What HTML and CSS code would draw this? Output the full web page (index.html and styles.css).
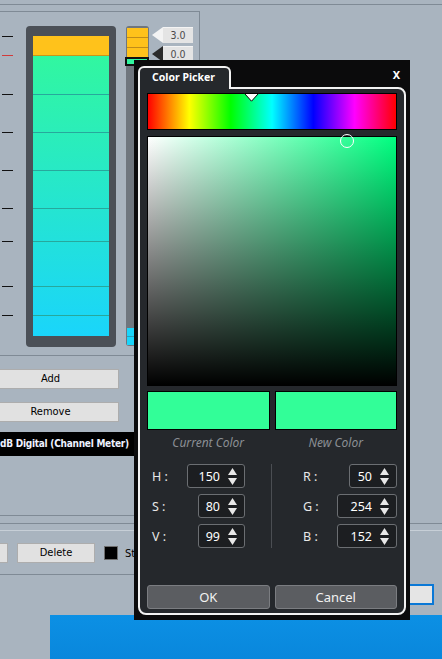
FILE: index.html
```html
<!DOCTYPE html>
<html>
<head>
<meta charset="utf-8">
<title>Color Picker</title>
<link rel="stylesheet" href="styles.css">
</head>
<body>
<div class="screen">
  <div class="topstrip"></div>

  <div class="left-panel">
    <div class="meters">
      <div class="ticks">
        <span class="tick" style="top:10px"></span>
        <span class="tick red" style="top:29px"></span>
        <span class="tick" style="top:68px"></span>
        <span class="tick" style="top:106px"></span>
        <span class="tick" style="top:144px"></span>
        <span class="tick" style="top:182px"></span>
        <span class="tick" style="top:215px"></span>
        <span class="tick" style="top:260px"></span>
        <span class="tick" style="top:289px"></span>
      </div>
      <div class="meter">
        <div class="bar">
          <div class="peak"></div>
          <div class="level">
            <div class="seg" style="height:38px"></div>
            <div class="seg" style="height:38px"></div>
            <div class="seg" style="height:38px"></div>
            <div class="seg" style="height:38px"></div>
            <div class="seg" style="height:33px"></div>
            <div class="seg" style="height:45px"></div>
            <div class="seg" style="height:29px"></div>
            <div class="seg" style="height:21px"></div>
          </div>
        </div>
      </div>
      <div class="mini">
        <div class="mini-seg yellow"></div>
        <div class="mini-seg yellow"></div>
        <div class="mini-seg yellow last"></div>
        <div class="mini-active"><div class="mini-active-fill"></div></div>
        <div class="mini-fill"></div>
        <div class="mini-seg cyan"></div>
        <div class="mini-seg cyan last"></div>
      </div>
      <div class="tags">
        <div class="tag light"><span class="arrow"></span><span class="val">3.0</span></div>
        <div class="tag dark"><span class="arrow"></span><span class="val">0.0</span></div>
      </div>
    </div>
    <div class="rule"></div>
    <button class="btn wide">Add</button>
    <button class="btn wide">Remove</button>
    <div class="band">dB Digital (Channel Meter)</div>
  </div>

  <div class="divider"></div>

  <div class="tools">
    <button class="btn cut"></button>
    <button class="btn del">Delete</button>
    <span class="check"></span>
    <span class="tool-label">Style</span>
  </div>
  <div class="rule2"></div>
  <div class="action-row"><button class="btn focus">Close</button></div>
  <div class="taskbar"><div class="task-gap"></div><div class="task-blue"></div></div>

  <div class="dialog">
    <div class="dlg-head">
      <div class="tab">Color Picker</div>
      <span class="close">X</span>
    </div>
    <div class="dlg-body">
      <div class="hue">
        <svg class="hue-mark" width="15" height="9" viewBox="0 0 15 9"><polygon points="0.5,0.5 14.5,0.5 7.5,8.2" fill="#ffffff" stroke="#000" stroke-width="1"/></svg>
      </div>
      <div class="sv"><span class="sv-cursor"></span></div>
      <div class="swatches">
        <div class="swatch"></div>
        <div class="swatch"></div>
      </div>
      <div class="swatch-labels">
        <span>Current Color</span>
        <span>New Color</span>
      </div>
      <div class="controls">
        <div class="col left">
          <div class="field"><span class="lbl">H :</span><div class="spin w58"><span>150</span><svg width="9" height="17" viewBox="0 0 9 17"><polygon points="4.5,0 9,7 0,7" fill="#e8e8e8"/><polygon points="0,10 9,10 4.5,17" fill="#e8e8e8"/></svg></div></div>
          <div class="field"><span class="lbl">S :</span><div class="spin w47"><span>80</span><svg width="9" height="17" viewBox="0 0 9 17"><polygon points="4.5,0 9,7 0,7" fill="#e8e8e8"/><polygon points="0,10 9,10 4.5,17" fill="#e8e8e8"/></svg></div></div>
          <div class="field"><span class="lbl">V :</span><div class="spin w47"><span>99</span><svg width="9" height="17" viewBox="0 0 9 17"><polygon points="4.5,0 9,7 0,7" fill="#e8e8e8"/><polygon points="0,10 9,10 4.5,17" fill="#e8e8e8"/></svg></div></div>
        </div>
        <div class="sep"></div>
        <div class="col right">
          <div class="field"><span class="lbl">R :</span><div class="spin w48"><span>50</span><svg width="9" height="17" viewBox="0 0 9 17"><polygon points="4.5,0 9,7 0,7" fill="#e8e8e8"/><polygon points="0,10 9,10 4.5,17" fill="#e8e8e8"/></svg></div></div>
          <div class="field"><span class="lbl">G :</span><div class="spin w60"><span>254</span><svg width="9" height="17" viewBox="0 0 9 17"><polygon points="4.5,0 9,7 0,7" fill="#e8e8e8"/><polygon points="0,10 9,10 4.5,17" fill="#e8e8e8"/></svg></div></div>
          <div class="field"><span class="lbl">B :</span><div class="spin w60"><span>152</span><svg width="9" height="17" viewBox="0 0 9 17"><polygon points="4.5,0 9,7 0,7" fill="#e8e8e8"/><polygon points="0,10 9,10 4.5,17" fill="#e8e8e8"/></svg></div></div>
        </div>
      </div>
      <div class="buttons">
        <button class="dbtn">OK</button>
        <button class="dbtn">Cancel</button>
      </div>
    </div>
  </div>
</div>
</body>
</html>
```

FILE: styles.css
```css
* { box-sizing: border-box; }
html, body { margin: 0; padding: 0; }
body {
  width: 442px;
  height: 659px;
  overflow: hidden;
  background: #a9b4bf;
  font-family: "DejaVu Sans Condensed", "DejaVu Sans", sans-serif;
}
.screen {
  position: relative;
  width: 442px;
  height: 659px;
  overflow: hidden;
  background: #a9b4bf;
  display: flex;
  flex-direction: column;
}
.topstrip {
  height: 5px;
  flex: none;
  border-bottom: 1px solid #7f8a95;
}

/* left panel */
.left-panel {
  width: 200px;
  height: 505px;
  flex: none;
  margin-top: 6px;
  border-top: 1px solid #7f8a95;
  border-right: 1px solid #7f8a95;
  border-bottom: 1px solid #7f8a95;
  padding-top: 14px;
  display: flex;
  flex-direction: column;
}
.meters { display: flex; height: 321px; flex: none; }
.ticks { position: relative; width: 26px; flex: none; }
.tick { position: absolute; left: 2px; width: 11px; height: 1px; background: #111; }
.tick.red { background: #d23a3a; }
.meter {
  width: 90px;
  height: 321px;
  flex: none;
  background: #4b5057;
  border-radius: 4px;
  padding: 10px 7px 11px;
}
.bar { height: 300px; display: flex; flex-direction: column; }
.peak { height: 20px; flex: none; background: #ffc21b; border-bottom: 1px solid #c9961a; }
.level {
  flex: 1;
  background: linear-gradient(#31f7a0, #1ad5fb);
  display: flex;
  flex-direction: column;
}
.seg { flex: none; border-top: 1px solid #27a89c; }
.seg:first-child { border-top: 0; }

.mini {
  width: 23px;
  height: 320px;
  flex: none;
  margin-left: 10px;
  background: #6f767e;
  border-radius: 3px;
  padding: 2px 1px 1px;
  display: flex;
  flex-direction: column;
}
.mini-seg { height: 10px; flex: none; border-bottom: 1px solid #c08c1a; }
.mini-seg.yellow { background: #ffc21b; }
.mini-seg.yellow.last { height: 9px; border-bottom: 0; }
.mini-seg.cyan { background: #1ad5fb; height: 9px; border-bottom: 1px solid #2a9fb8; }
.mini-seg.cyan.last { height: 8px; border-bottom: 0; }
.mini-active {
  height: 9px;
  flex: none;
  margin: 0 -1px 0 -2px;
  background: #111;
  padding: 2px 2px;
}
.mini-active-fill { height: 5px; background: #31f7a0; }
.mini-fill { flex: 1; }

.tags { margin-left: 3px; padding-top: 1px; display: flex; flex-direction: column; gap: 3px; }
.tag { display: flex; height: 16px; }
.tag .arrow {
  width: 0;
  height: 0;
  border-top: 8px solid transparent;
  border-bottom: 8px solid transparent;
  border-right: 11px solid #f3f3f3;
}
.tag.dark .arrow { border-right-color: #2b2b2b; }
.tag .val {
  width: 30px;
  background: #e4e4e4;
  border-top: 1px solid #f4f4f4;
  color: #4a4a4a;
  font-size: 10.5px;
  line-height: 15px;
  text-align: center;
}

.rule { height: 1px; flex: none; margin-top: 8px; background: #7f8a95; }
.btn {
  display: block;
  font-family: "DejaVu Sans Condensed", "DejaVu Sans", sans-serif;
  font-size: 11px;
  color: #000;
  background: #e1e1e1;
  border: 1px solid #adadad;
  padding: 0;
  height: 20px;
  line-height: 18px;
  text-align: center;
}
.btn.wide { width: 137px; margin-left: -18px; margin-top: 13px; flex: none; }
.band {
  height: 24px;
  flex: none;
  margin-top: 10px;
  width: 200px;
  background: #000;
  color: #eef2ff;
  font-weight: 700;
  font-size: 10px;
  line-height: 24px;
  letter-spacing: -0.25px;
  white-space: nowrap;
  overflow: hidden;
}

.divider {
  height: 8px;
  flex: none;
  margin-top: 7px;
  border-top: 1px solid #7f8a95;
  border-bottom: 1px solid #c7cfd7;
}
.tools { display: flex; align-items: center; height: 20px; flex: none; margin-top: 12px; }
.btn.cut { width: 68px; margin-left: -60px; }
.btn.del { width: 78px; margin-left: 9px; }
.check {
  width: 14px;
  height: 14px;
  margin-left: 9px;
  background: #000;
  border: 1px solid #6e6e6e;
}
.tool-label { margin-left: 7px; font-size: 11px; color: #000; }
.rule2 { height: 1px; flex: none; width: 220px; margin-top: 11px; background: #7f8a95; }
.action-row { display: flex; justify-content: flex-end; height: 21px; flex: none; margin-top: 9px; padding-right: 8px; }
.btn.focus { width: 100px; height: 21px; border: 2px solid #0a78d6; background: #e5e5e5; }
.taskbar {
  flex: none;
  height: 44px;
  margin-top: 10px;
  display: flex;
}
.task-gap { width: 50px; flex: none; background: #a9b4bf; }
.task-blue { flex: 1; background: linear-gradient(#0c90e4, #0987dc); }

/* dialog */
.dialog {
  position: absolute;
  left: 134px;
  top: 60px;
  width: 276px;
  height: 560px;
  background: #0b0b0c;
  padding: 6px 4px 5px 4px;
  display: flex;
  flex-direction: column;
  font-family: "Noto Sans", "Open Sans", sans-serif;
}
.dlg-head { height: 21px; flex: none; display: flex; align-items: flex-start; position: relative; z-index: 2; }
.tab {
  width: 93px;
  height: 23px;
  border: 2px solid #f2f2f2;
  border-bottom: 0;
  border-radius: 6px 6px 0 0;
  background: #25282c;
  color: #fff;
  font-weight: 700;
  font-size: 10.5px;
  padding-left: 12px;
  line-height: 19px;
  white-space: nowrap;
}
.close {
  margin-left: auto;
  margin-right: 6px;
  margin-top: 2px;
  color: #fff;
  font-weight: 700;
  font-size: 11px;
  line-height: 14px;
}
.dlg-body {
  flex: 1;
  border: 2px solid #f2f2f2;
  border-radius: 0 8px 8px 8px;
  background: #25282c;
  padding: 4px 7px 4px 7px;
  display: flex;
  flex-direction: column;
}
.hue {
  position: relative;
  height: 37px;
  flex: none;
  border: 1px solid #000;
  background: linear-gradient(to right, #f00, #ff0, #0f0, #0ff, #00f, #f0f, #f00);
}
.hue-mark { position: absolute; left: 96px; top: -1px; display: block; }
.sv {
  position: relative;
  height: 250px;
  flex: none;
  margin-top: 6px;
  border: 1px solid #000;
  background: linear-gradient(to top, #000, rgba(0, 0, 0, 0)), linear-gradient(to right, #fff, #00ff80);
}
.sv-cursor {
  position: absolute;
  left: 192px;
  top: -3px;
  width: 14px;
  height: 14px;
  border: 1.5px solid #fff;
  border-radius: 50%;
}
.swatches { display: flex; gap: 5px; margin-top: 5px; height: 39px; flex: none; }
.swatch { flex: 1; background: #32fe98; border: 1px solid #000; }
.swatch-labels { display: flex; gap: 5px; height: 26px; flex: none; }
.swatch-labels span {
  flex: 1;
  text-align: center;
  color: #8b8f94;
  font-style: italic;
  font-size: 12px;
  line-height: 26px;
}
.controls { display: flex; margin-top: 8px; flex: none; }
.col { display: flex; flex-direction: column; gap: 6px; }
.col.left { width: 98px; }
.col.right { width: 94px; margin-left: 31px; }
.sep { width: 1px; height: 84px; margin-left: 26px; background: #4b4e53; }
.field { display: flex; align-items: center; height: 24px; }
.lbl { color: #e8e8e8; font-size: 12.5px; }
.col.left .lbl { padding-left: 5px; }
.spin {
  margin-left: auto;
  height: 24px;
  border: 1px solid #6b6e72;
  border-radius: 3px;
  background: #1c1e21;
  display: flex;
  align-items: center;
  justify-content: flex-end;
  gap: 8px;
  padding-right: 7px;
  color: #fff;
  font-size: 12.5px;
}
.spin svg { display: block; }
.w58 { width: 58px; }
.w47 { width: 47px; }
.w48 { width: 48px; }
.w60 { width: 60px; }
.buttons { display: flex; gap: 5px; margin-top: auto; height: 24px; flex: none; }
.dbtn {
  flex: 1;
  height: 24px;
  background: #5b5d61;
  border: 1px solid #7b7d81;
  border-radius: 3px;
  color: #f2f2f2;
  font-family: "Noto Sans", "Open Sans", sans-serif;
  font-size: 13px;
  padding: 0;
}
```
